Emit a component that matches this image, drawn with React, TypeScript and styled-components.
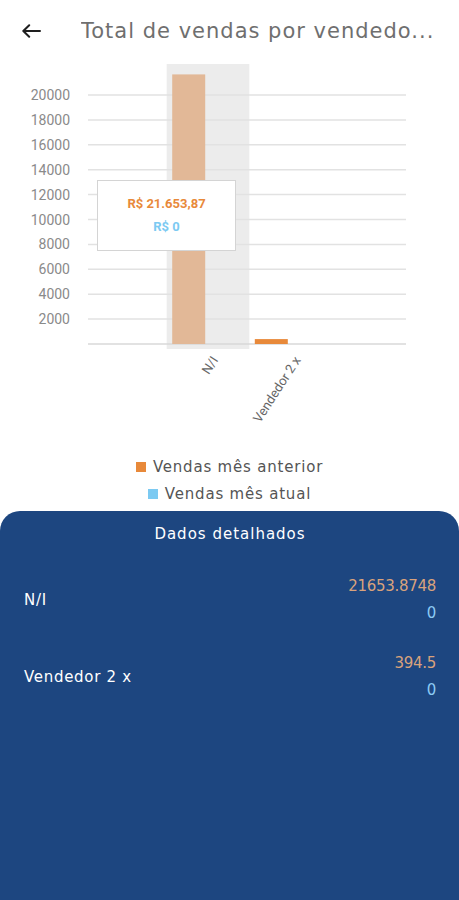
import React from "react";
import styled, { createGlobalStyle } from "styled-components";

const Global = createGlobalStyle`
  html, body { margin: 0; padding: 0; background: #ffffff; }
  body { font-family: "DejaVu Sans", "Open Sans", sans-serif; }
  * { box-sizing: border-box; }
`;

const Page = styled.div`
  width: 459px;
  height: 900px;
  display: flex;
  flex-direction: column;
  background: #ffffff;
  overflow: hidden;
`;

const Header = styled.header`
  height: 60px;
  display: flex;
  align-items: center;
  padding: 2px 0 0 21px;
  flex-shrink: 0;
`;

const BackButton = styled.button`
  border: none;
  background: transparent;
  padding: 0;
  width: 20px;
  height: 20px;
  display: flex;
  align-items: center;
  justify-content: center;
  cursor: pointer;
`;

const Title = styled.h1`
  margin: 0 0 0 40px;
  max-width: 360px;
  font-family: "DejaVu Sans", "Open Sans", sans-serif;
  font-weight: 400;
  font-size: 21px;
  letter-spacing: 1px;
  color: #6f6f6f;
  white-space: nowrap;
  overflow: hidden;
  text-overflow: ellipsis;
`;

const ChartArea = styled.div`
  position: relative;
  height: 385px;
  flex-shrink: 0;
`;

const Tooltip = styled.div`
  position: absolute;
  left: 97px;
  top: 120px;
  width: 139px;
  height: 71px;
  background: #ffffff;
  border: 1px solid #d4d4d4;
  display: flex;
  flex-direction: column;
  align-items: center;
  justify-content: center;
  gap: 5px;
  font-family: Roboto, "Liberation Sans", sans-serif;
  font-size: 13px;
  font-weight: 700;
`;

const TipLine = styled.span<{ $color: string }>`
  color: ${(p) => p.$color};
  line-height: 18px;
`;

const Legend = styled.ul`
  list-style: none;
  margin: 0;
  padding: 8px 0 0;
  display: flex;
  flex-direction: column;
  align-items: center;
  flex-shrink: 0;
  height: 66px;
`;

const LegendItem = styled.li`
  display: flex;
  align-items: center;
  gap: 7px;
  height: 27px;
  font-family: "DejaVu Sans", "Open Sans", sans-serif;
  font-size: 15px;
  color: #555555;
  letter-spacing: 0.8px;
`;

const Swatch = styled.span<{ $color: string }>`
  width: 10px;
  height: 10px;
  background: ${(p) => p.$color};
  flex-shrink: 0;
`;

const Panel = styled.section`
  flex: 1;
  background: #1d4680;
  border-radius: 20px 20px 0 0;
  padding: 12px 23px 0 24px;
  display: flex;
  flex-direction: column;
`;

const PanelTitle = styled.h2`
  margin: 0 0 28px;
  text-align: center;
  font-family: "DejaVu Sans", "Open Sans", sans-serif;
  font-weight: 400;
  font-size: 15px;
  line-height: 22px;
  letter-spacing: 1px;
  color: #ffffff;
`;

const Rows = styled.div`
  display: flex;
  flex-direction: column;
  gap: 23px;
`;

const Row = styled.div`
  display: flex;
  align-items: center;
  justify-content: space-between;
`;

const RowLabel = styled.span`
  font-family: "DejaVu Sans", "Open Sans", sans-serif;
  font-size: 15px;
  letter-spacing: 0.7px;
  color: #ffffff;
`;

const Values = styled.div`
  display: flex;
  flex-direction: column;
  align-items: flex-end;
`;

const Value = styled.span<{ $color: string }>`
  font-family: "DejaVu Sans", "Open Sans", sans-serif;
  font-size: 15px;
  line-height: 27px;
  letter-spacing: -0.3px;
  color: ${(p) => p.$color};
`;

const ArrowIcon = () => (
  <svg width="20" height="14" viewBox="0 0 20 14" fill="none">
    <path d="M19 7H2.5M8.2 1.2L2.3 7l5.9 5.8" stroke="#1f1f1f" strokeWidth="2" strokeLinecap="round" strokeLinejoin="round" />
  </svg>
);

const ticks = [2000, 4000, 6000, 8000, 10000, 12000, 14000, 16000, 18000, 20000];
const BASE = 284; // baseline y inside svg (absolute 344)
const PER = 24.9 / 2000;
const yOf = (v: number) => BASE - v * PER;

const data = [
  { name: "N/I", prev: 21653.8748, cur: 0, band: 166.7 },
  { name: "Vendedor 2 x", prev: 394.5, cur: 0, band: 249.3 },
];

const Chart = () => (
  <svg width="459" height="385" viewBox="0 0 459 385">
    <rect x="166.7" y="4" width="82.6" height="285" fill="#ececec" />
    {ticks.map((t) => (
      <g key={t}>
        <line x1="88" x2="406" y1={yOf(t)} y2={yOf(t)} stroke="#e2e2e2" strokeWidth="1.5" />
        <text
          x="70"
          y={yOf(t)}
          textAnchor="end"
          dominantBaseline="central"
          fontFamily="Roboto, 'Liberation Sans', sans-serif"
          fontSize="14"
          fill="#8a8a8a"
        >
          {t}
        </text>
      </g>
    ))}
    <line x1="88" x2="406" y1={BASE} y2={BASE} stroke="#d8d8d8" strokeWidth="1.5" />
    {data.map((d, i) => {
      const top = yOf(d.prev);
      const lx = d.band + 52;
      const ly = 300;
      return (
        <g key={d.name}>
          <rect
            x={d.band + 5.5}
            y={top}
            width="33"
            height={BASE - top}
            fill={i === 0 ? "#e2b897" : "#e8893a"}
          />
          <text
            x={lx}
            y={ly}
            textAnchor="end"
            transform={`rotate(-57 ${lx} ${ly})`}
            fontFamily="Roboto, 'Liberation Sans', sans-serif"
            fontSize="13"
            fill="#666666"
          >
            {d.name}
          </text>
        </g>
      );
    })}
  </svg>
);

export default function App() {
  return (
    <>
      <Global />
      <Page>
        <Header>
          <BackButton aria-label="Voltar">
            <ArrowIcon />
          </BackButton>
          <Title>Total de vendas por vendedo...</Title>
        </Header>
        <ChartArea>
          <Chart />
          <Tooltip>
            <TipLine $color="#e8893a">R$ 21.653,87</TipLine>
            <TipLine $color="#7ccaf2">R$ 0</TipLine>
          </Tooltip>
        </ChartArea>
        <Legend>
          <LegendItem>
            <Swatch $color="#e8893a" />
            Vendas mês anterior
          </LegendItem>
          <LegendItem>
            <Swatch $color="#7ccaf2" />
            Vendas mês atual
          </LegendItem>
        </Legend>
        <Panel>
          <PanelTitle>Dados detalhados</PanelTitle>
          <Rows>
            <Row>
              <RowLabel>N/I</RowLabel>
              <Values>
                <Value $color="#d9a27c">21653.8748</Value>
                <Value $color="#8ccaf4">0</Value>
              </Values>
            </Row>
            <Row>
              <RowLabel>Vendedor 2 x</RowLabel>
              <Values>
                <Value $color="#d9a27c">394.5</Value>
                <Value $color="#8ccaf4">0</Value>
              </Values>
            </Row>
          </Rows>
        </Panel>
      </Page>
    </>
  );
}
